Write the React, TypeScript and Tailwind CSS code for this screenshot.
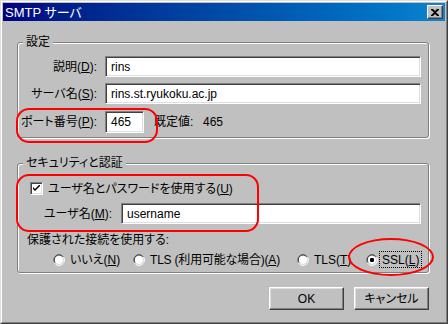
import React from "react";

const font = {
  fontFamily: '"Liberation Sans", "Noto Sans CJK JP", sans-serif',
};

function Sunken({ className, children }: { className: string; children?: React.ReactNode }) {
  return (
    <div
      className={`bg-white border border-t-[#808080] border-l-[#808080] border-b-white border-r-white shadow-[inset_1px_1px_0_#404040,inset_-1px_-1px_0_#dfdfdf] flex items-center pl-[5px] text-[12px] ${className}`}
    >
      {children}
    </div>
  );
}

function Radio({ checked }: { checked?: boolean }) {
  return (
    <svg width="12" height="12" viewBox="0 0 12 12" className="shrink-0">
      <path d="M10.5 3 A5.3 5.3 0 0 0 1.5 9" fill="none" stroke="#808080" strokeWidth="1" />
      <path d="M9.5 2.5 A4.3 4.3 0 0 0 2.5 8.5" fill="none" stroke="#404040" strokeWidth="1" />
      <circle cx="6" cy="6" r="4" fill="#fff" />
      <path d="M1.5 9 A5.3 5.3 0 0 0 10.5 3" fill="none" stroke="#fff" strokeWidth="1" />
      <path d="M2.5 9 A4.3 4.3 0 0 0 9.5 3" fill="none" stroke="#dfdfdf" strokeWidth="1" />
      {checked && <rect x="4" y="4" width="4" height="4" rx="1.2" fill="#000" />}
    </svg>
  );
}

function Button({ children, className }: { children: React.ReactNode; className?: string }) {
  return (
    <div
      className={`w-[75px] h-[23px] flex items-center justify-center text-[12px] border border-t-white border-l-white border-b-[#404040] border-r-[#404040] shadow-[inset_-1px_-1px_0_#808080,inset_1px_1px_0_#dfdfdf] ${className ?? ""}`}
    >
      {children}
    </div>
  );
}

function GroupBox({
  title,
  className,
  children,
}: {
  title: string;
  className: string;
  children: React.ReactNode;
}) {
  return (
    <div
      className={`relative w-[412px] border border-[#808080] rounded-[3px] shadow-[inset_1px_1px_0_#fff,1px_1px_0_#fff] ${className}`}
    >
      <span className="absolute -top-[8px] left-[5px] px-[3px] bg-[#c0c0c0] text-[12px] leading-[14px]">
        {title}
      </span>
      {children}
    </div>
  );
}

export default function App() {
  return (
    <div
      style={font}
      className="relative w-[448px] h-[324px] bg-[#c0c0c0] text-black [font-feature-settings:'palt'] border border-t-[#dfdfdf] border-l-[#dfdfdf] border-b-[#404040] border-r-[#404040] overflow-hidden"
    >
      <div className="w-full h-full border border-t-white border-l-white border-b-[#808080] border-r-[#808080] p-px flex flex-col">
        {/* Title bar */}
        <div className="h-[18px] shrink-0 bg-gradient-to-r from-[#000080] to-[#1084d0] flex items-center justify-between pl-[2px] pr-[2px]">
          <span className="text-white text-[13px] leading-none">SMTP サーバ</span>
          <div className="w-[16px] h-[14px] bg-[#c0c0c0] border border-t-white border-l-white border-b-[#404040] border-r-[#404040] shadow-[inset_-1px_-1px_0_#808080] flex items-center justify-center">
            <svg width="8" height="7" viewBox="0 0 8 7">
              <path d="M0 0h2l2 2 2-2h2v1L5 3.5 8 6v1H6L4 5 2 7H0V6l3-2.5L0 1z" fill="#000" />
            </svg>
          </div>
        </div>

        <div className="flex flex-col pl-[14px] text-[12px]">
          {/* 設定 */}
          <GroupBox title="設定" className="mt-[21px] h-[96px]">
            <div className="flex flex-col pt-[13px]">
              <div className="flex items-center h-[21px]">
                <span className="w-[79px] text-right">
                  説明(<u>D</u>):
                </span>
                <Sunken className="ml-[8px] w-[316px] h-[21px]">rins</Sunken>
              </div>
              <div className="flex items-center h-[21px] mt-[6px]">
                <span className="w-[79px] text-right">
                  サーバ名(<u>S</u>):
                </span>
                <Sunken className="ml-[8px] w-[316px] h-[21px]">rins.st.ryukoku.ac.jp</Sunken>
              </div>
              <div className="flex items-center h-[22px] mt-[7px]">
                <span className="w-[79px] text-right">
                  ポート番号(<u>P</u>):
                </span>
                <Sunken className="ml-[8px] w-[39px] h-[22px]">465</Sunken>
                <span className="ml-[10px] w-[49px]">既定値:</span>
                <span>465</span>
              </div>
            </div>
          </GroupBox>

          {/* セキュリティと認証 */}
          <GroupBox title="セキュリティと認証" className="mt-[25px] h-[110px]">
            <div className="flex flex-col pt-[18px]">
              <div className="flex items-center h-[13px] pl-[12px]">
                <div className="w-[13px] h-[13px] bg-white border border-t-[#808080] border-l-[#808080] border-b-white border-r-white shadow-[inset_1px_1px_0_#404040,inset_-1px_-1px_0_#dfdfdf] flex items-center justify-center">
                  <svg width="7" height="7" viewBox="0 0 7 7">
                    <path d="M0 2v2l2 2 5-5V-1L2 4z" fill="#000" />
                  </svg>
                </div>
                <span className="ml-[5px]">
                  ユーザ名とパスワードを使用する(<u>U</u>)
                </span>
              </div>
              <div className="flex items-center h-[21px] mt-[8px]">
                <span className="w-[94px] text-right">
                  ユーザ名(<u>M</u>):
                </span>
                <Sunken className="ml-[9px] w-[300px] h-[21px]">username</Sunken>
              </div>
              <div className="h-[14px] leading-[14px] mt-[9px] pl-[9px]">
                保護された接続を使用する:
              </div>
              <div className="flex items-center h-[17px] mt-[4px] pl-[35px]">
                <div className="w-[80px] flex items-center">
                  <Radio />
                  <span className="ml-[5px]">
                    いいえ(<u>N</u>)
                  </span>
                </div>
                <div className="w-[164px] flex items-center">
                  <Radio />
                  <span className="ml-[5px] tracking-[-0.2px]">
                    TLS (利用可能な場合)(<u>A</u>)
                  </span>
                </div>
                <div className="w-[69px] flex items-center">
                  <Radio />
                  <span className="ml-[5px]">
                    TLS(<u>T</u>)
                  </span>
                </div>
                <div className="flex items-center">
                  <Radio checked />
                  <span className="ml-[1px] h-[17px] px-[2px] flex items-center border border-dotted border-black">
                    SSL(<u>L</u>)
                  </span>
                </div>
              </div>
            </div>
          </GroupBox>

          <div className="flex justify-end w-[412px] gap-[10px] mt-[14px]">
            <Button>OK</Button>
            <Button>キャンセル</Button>
          </div>
        </div>
      </div>

      {/* red annotations */}
      <div className="absolute left-[15px] top-[107px] w-[142px] h-[35px] border-2 border-[#f00] rounded-[13px] pointer-events-none" />
      <div className="absolute left-[15px] top-[173px] w-[243px] h-[58px] border-2 border-[#f00] rounded-[13px] pointer-events-none" />
      <div className="absolute left-[347px] top-[237px] w-[86px] h-[38px] border-2 border-[#f00] rounded-[50%] pointer-events-none" />
    </div>
  );
}
